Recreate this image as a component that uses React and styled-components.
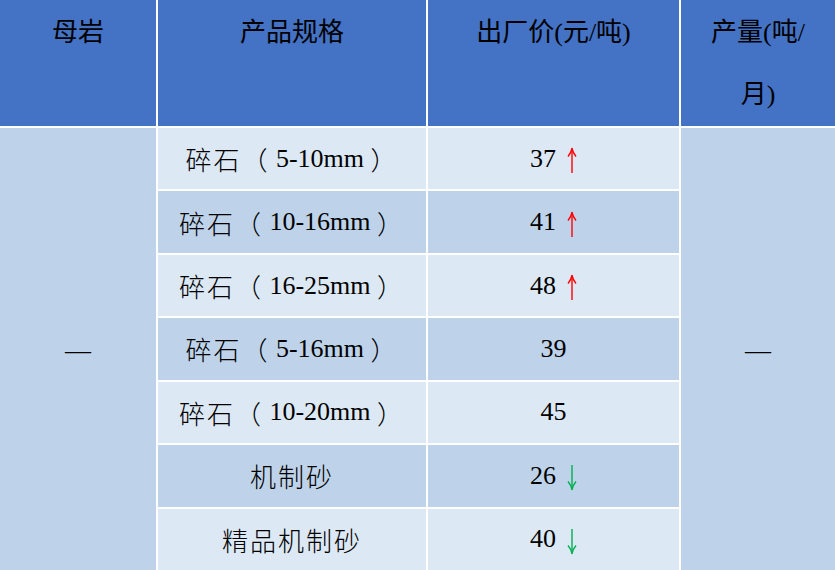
import React from 'react'
import styled, { createGlobalStyle } from 'styled-components'

const GlobalStyle = createGlobalStyle`
  html, body {
    margin: 0;
    padding: 0;
    background: #ffffff;
  }
`

const rows = [
  { name: '碎石', size: '5-10mm', price: 37, trend: 'up' },
  { name: '碎石', size: '10-16mm', price: 41, trend: 'up' },
  { name: '碎石', size: '16-25mm', price: 48, trend: 'up' },
  { name: '碎石', size: '5-16mm', price: 39 },
  { name: '碎石', size: '10-20mm', price: 45 },
  { name: '机制砂', price: 26, trend: 'down' },
  { name: '精品机制砂', price: 40, trend: 'down' },
]

function TrendArrow({ trend }) {
  const color = trend === 'up' ? '#ff0000' : '#00b050'
  return (
    <ArrowIcon width="10" height="27" viewBox="0 0 10 27" $down={trend === 'down'}>
      <path d="M5 1.5 V26" stroke={color} strokeWidth="1.4" fill="none" />
      <path d="M1 9.5 Q4 6 5 1.5 Q6 6 9 9.5" stroke={color} strokeWidth="1.4" fill="none" strokeLinejoin="round" />
    </ArrowIcon>
  )
}

function App() {
  return (
    <>
      <GlobalStyle />
      <Table>
        <HeadCell>母岩</HeadCell>
        <HeadCell>产品规格</HeadCell>
        <HeadCell>出厂价(元/吨)</HeadCell>
        <HeadCell $narrow>产量(吨/月)</HeadCell>

        <MergedCell $col={1}>—</MergedCell>
        {rows.map((row, i) => (
          <React.Fragment key={row.name + (row.size || '')}>
            <BodyCell $col={2} $row={i + 2} $dark={i % 2 === 1}>
              {row.size ? (
                <>
                  <Cn>{row.name}（</Cn>&nbsp;{row.size}&nbsp;<Cn>）</Cn>
                </>
              ) : (
                <Cn>{row.name}</Cn>
              )}
            </BodyCell>
            <BodyCell $col={3} $row={i + 2} $dark={i % 2 === 1}>
              {row.price}
              {row.trend && <TrendArrow trend={row.trend} />}
            </BodyCell>
          </React.Fragment>
        ))}
        <MergedCell $col={4}>—</MergedCell>
      </Table>
    </>
  )
}

const Table = styled.div`
  display: grid;
  grid-template-columns: 156px 268px 251px 1fr;
  grid-template-rows: 126px repeat(7, 1fr);
  gap: 2px;
  width: 835px;
  height: 570px;
  background: #ffffff;
  overflow: hidden;
`

const HeadCell = styled.div`
  background: #4472c4;
  color: #000000;
  font-family: "Liberation Serif", "Noto Sans CJK SC", serif;
  font-size: 26px;
  line-height: 62px;
  text-align: center;
  padding: 2px ${(p) => (p.$narrow ? '16px' : '4px')} 0;
`

const BodyCell = styled.div`
  grid-column: ${(p) => p.$col};
  grid-row: ${(p) => p.$row};
  display: flex;
  align-items: center;
  justify-content: center;
  background: ${(p) => (p.$dark ? '#bed3ea' : '#dde8f5')};
  color: #000000;
  font-family: "Liberation Serif", "Noto Sans CJK SC", serif;
  font-size: 26px;
  white-space: nowrap;
`

const Cn = styled.span`
  font-family: "Noto Sans CJK SC", sans-serif;
  font-weight: 300;
  letter-spacing: 2px;
`

const ArrowIcon = styled.svg`
  margin-left: 11px;
  margin-top: 4px;
  transform: ${(p) => (p.$down ? 'rotate(180deg)' : 'none')};
`

const MergedCell = styled.div`
  grid-column: ${(p) => p.$col};
  grid-row: 2 / span 7;
  display: flex;
  align-items: center;
  justify-content: center;
  background: #bed3ea;
  color: #000000;
  font-family: "Liberation Serif", serif;
  font-size: 26px;
  padding-top: 4px;
`

export default App
